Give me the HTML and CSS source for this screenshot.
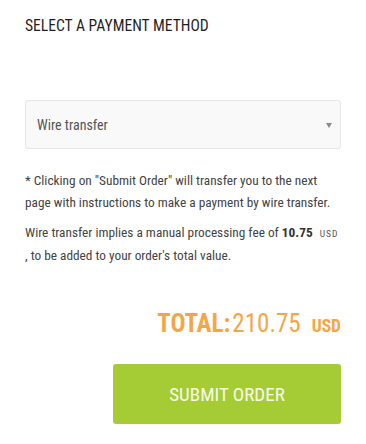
FILE: index.html
```html
<!DOCTYPE html>
<html lang="en">
<head>
<meta charset="utf-8">
<title>Payment method</title>
<link rel="stylesheet" href="styles.css">
</head>
<body>
<main class="payment">
  <h2 class="payment__title">SELECT A PAYMENT METHOD</h2>
  <div class="select-wrap">
    <select class="select">
      <option>Wire transfer</option>
    </select>
  </div>
  <p class="note">* Clicking on "Submit Order" will transfer you to the next page with instructions to make a payment by wire transfer.</p>
  <p class="note">Wire transfer implies a manual processing fee of <strong>10.75</strong> <span class="cur-sm">USD</span> , to be added to your order's total value.</p>
  <div class="total">
    <span class="total__label">TOTAL:</span><span class="total__value">210.75</span><span class="total__cur">USD</span>
  </div>
  <div class="actions">
    <button class="submit" type="button">SUBMIT ORDER</button>
  </div>
</main>
</body>
</html>
```
FILE: styles.css
```css
* { box-sizing: border-box; }
html, body { margin: 0; padding: 0; background: #fff; }
body { font-family: "Roboto Condensed", Roboto, "Liberation Sans", sans-serif; color: #444; }

.payment { padding: 16px 25px 0 25px; display: flex; flex-direction: column; }

.payment__title {
  margin: 0;
  font-size: 15.6px;
  line-height: 20px;
  font-weight: 400;
  color: #1f1f1f;
}

.select-wrap { position: relative; margin-top: 64px; }
.select {
  appearance: none;
  -webkit-appearance: none;
  width: 100%;
  height: 49px;
  margin: 0;
  padding: 0 11px;
  background: #f9f9f9;
  border: 1px solid #e6e6e6;
  border-radius: 3px;
  font-family: inherit;
  font-size: 14px;
  color: #555;
  outline: none;
}
.select-wrap::after {
  content: "";
  position: absolute;
  right: 9px;
  top: 23px;
  border-left: 3px solid transparent;
  border-right: 3px solid transparent;
  border-top: 5px solid #8a8a8a;
  pointer-events: none;
}

.note {
  margin: 0;
  font-size: 13.3px;
  line-height: 22px;
  color: #444;
}
.note:first-of-type { margin-top: 21px; }
.note + .note { margin-top: 8px; }
.note strong { font-weight: 700; color: #333; }
.cur-sm { font-size: 9.5px; margin-left: 4px; letter-spacing: 1px; color: #555; }

.total {
  margin-top: 42px;
  display: flex;
  justify-content: flex-end;
  align-items: baseline;
  color: #f4a647;
  line-height: 30px;
}
.total__label { font-size: 25px; font-weight: 700; }
.total__value { font-size: 25px; font-weight: 400; margin-left: 2px; }
.total__cur { font-size: 17.5px; font-weight: 700; margin-left: 11px; }

.actions { display: flex; justify-content: flex-end; margin-top: 23px; }
.submit {
  width: 228px;
  height: 60px;
  border: 0;
  border-radius: 3px;
  background: #a6cc35;
  color: #f7f9ea;
  font-family: inherit;
  font-size: 19px;
  font-weight: 400;
  cursor: pointer;
}
```
